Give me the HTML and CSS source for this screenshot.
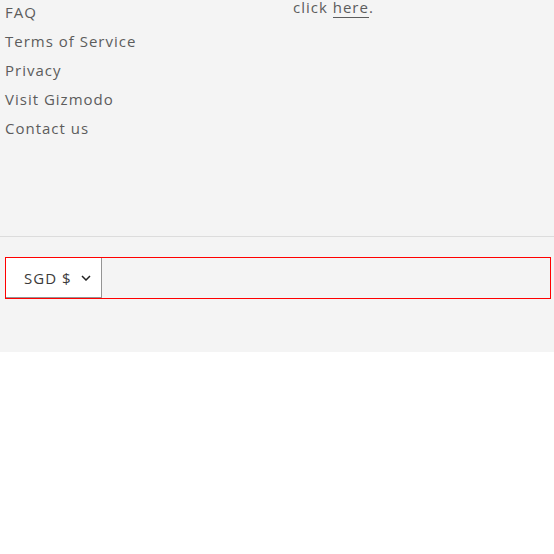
FILE: index.html
```html
<!DOCTYPE html>
<html>
<head>
<meta charset="utf-8">
<link rel="stylesheet" href="styles.css">
</head>
<body>
<footer class="site-footer">
  <div class="footer-top">
    <ul class="footer-links">
      <li><a href="#">FAQ</a></li>
      <li><a href="#">Terms of Service</a></li>
      <li><a href="#">Privacy</a></li>
      <li><a href="#">Visit Gizmodo</a></li>
      <li><a href="#">Contact us</a></li>
    </ul>
    <div class="footer-text">
      <p>click <a href="#" class="underlined">here</a>.</p>
    </div>
  </div>
  <hr class="footer-divider">
  <div class="footer-bottom">
    <div class="currency-form">
      <div class="currency-select">
        <span>SGD $</span>
        <svg class="chevron" width="10" height="6" viewBox="0 0 10 6"><path d="M1 1l4 4 4-4" fill="none" stroke="#222" stroke-width="1.5"/></svg>
      </div>
    </div>
  </div>
</footer>
</body>
</html>
```
FILE: styles.css
```css
* { box-sizing: border-box; }
html, body { margin: 0; padding: 0; background: #fff; }
body { font-family: "Open Sans", "DejaVu Sans", sans-serif; color: #5c5c5c; font-size: 15px; }
.site-footer { background: #f4f4f4; height: 354px; }
.footer-top { display: grid; grid-template-columns: 288px 1fr; padding: 0 5px; margin-top: -2px; height: 238px; }
.footer-links { list-style: none; margin: 0; padding: 0; }
.footer-links li { line-height: 29px; }
.footer-links a { color: #5c5c5c; text-decoration: none; letter-spacing: 1px; }
.footer-text p { margin: 0; line-height: 21px; margin-top: -1px; letter-spacing: 1px; }
.footer-text .underlined { color: #5c5c5c; text-decoration: none; border-bottom: 1px solid #5c5c5c; }
.footer-divider { margin: 0; border: 0; border-top: 1px solid #dcdcdc; }
.footer-bottom { padding: 20px 3px 0 5px; }
.currency-form { border: 1px solid #ff0000; height: 42px; }
.currency-select { width: 96px; height: 40px; background: #fff; border-right: 1px solid #949494; border-bottom: 1px solid #949494; display: flex; align-items: center; padding-left: 18px; gap: 9px; color: #3a3a3a; letter-spacing: 1px; }
.chevron { display: block; margin-top: 1px; }
```
